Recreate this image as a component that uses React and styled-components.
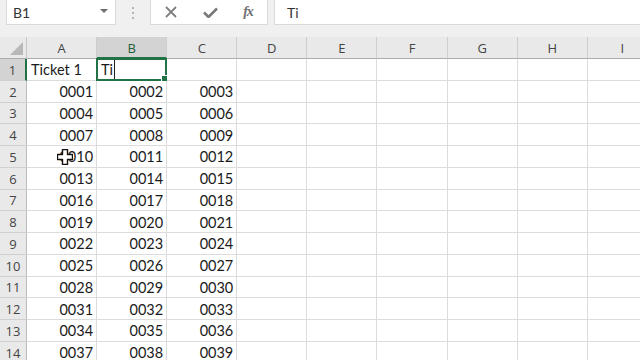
import { Fragment } from "react";
import styled, { createGlobalStyle } from "styled-components";

const GlobalStyle = createGlobalStyle`
  html, body {
    margin: 0;
    padding: 0;
    background: #ffffff;
    overflow: hidden;
  }
`;

// Page frame
const Sheet = styled.div`
  width: 640px;
  height: 360px;
  overflow: hidden;
  display: flex;
  flex-direction: column;
  background: #ffffff;
  font-family: Lato, "Liberation Sans", sans-serif;
`;

// Formula bar strip
const FormulaBar = styled.div`
  height: 37px;
  flex: 0 0 auto;
  display: flex;
  align-items: flex-start;
  padding-left: 6px;
  background: #f0f0f0;
  box-sizing: border-box;
`;

const NameBox = styled.div`
  width: 110px;
  height: 25px;
  box-sizing: border-box;
  background: #ffffff;
  border: 1px solid #d9d9d9;
  border-top: none;
  display: flex;
  align-items: center;
  justify-content: space-between;
  padding: 0 7px 0 6px;
  font-size: 14px;
  color: #333333;
`;

const DropArrow = styled.span`
  width: 0;
  height: 0;
  border-left: 4px solid transparent;
  border-right: 4px solid transparent;
  border-top: 4px solid #6d6d6d;
  margin-top: -2px;
`;

const Splitter = styled.div`
  width: 34px;
  height: 25px;
  display: flex;
  flex-direction: column;
  align-items: center;
  justify-content: center;
  gap: 3px;
`;

const Dot = styled.span`
  width: 2px;
  height: 2px;
  background: #b5b5b5;
`;

const ButtonGroup = styled.div`
  width: 118px;
  height: 25px;
  box-sizing: border-box;
  background: #ffffff;
  border: 1px solid #d9d9d9;
  border-top: none;
  display: grid;
  grid-template-columns: 40px 38px 38px;
  align-items: center;
`;

const BarButton = styled.div`
  display: flex;
  align-items: center;
  justify-content: center;
  height: 100%;
  color: #7d7d7d;
`;

const FxLabel = styled.span`
  font-family: "Liberation Serif", serif;
  font-style: italic;
  font-size: 14px;
  font-weight: bold;
  color: #6f6f6f;
  letter-spacing: -1px;
`;

const FormulaInput = styled.div`
  flex: 1;
  height: 25px;
  margin-left: 6px;
  box-sizing: border-box;
  background: #ffffff;
  border: 1px solid #d9d9d9;
  border-top: none;
  border-right: none;
  display: flex;
  align-items: center;
  padding-left: 12px;
  font-size: 14px;
  color: #333333;
`;

// Worksheet grid
const Grid = styled.div`
  display: grid;
  grid-template-columns: 27px repeat(9, 70.1px);
  grid-template-rows: 22px;
  grid-auto-rows: 21.75px;
`;

const Corner = styled.div`
  background: #e9e9e9;
  border-right: 1px solid #c6c6c6;
  border-bottom: 1px solid #ababab;
  box-sizing: border-box;
  position: relative;
`;

const CornerMark = styled.span`
  position: absolute;
  right: 3px;
  bottom: 3px;
  width: 13px;
  height: 13px;
  background: #b8b8b8;
  clip-path: polygon(100% 0, 100% 100%, 0 100%);
`;

const ColHeader = styled.div`
  box-sizing: border-box;
  background: ${(p) => (p.$selected ? "#d3d3d3" : "#e9e9e9")};
  border-right: 1px solid #cdcdcd;
  border-bottom: ${(p) => (p.$selected ? "2px solid #217346" : "1px solid #ababab")};
  display: flex;
  align-items: center;
  justify-content: center;
  font-family: "Open Sans", sans-serif;
  font-size: 13px;
  color: ${(p) => (p.$selected ? "#1f5e3a" : "#444444")};
  padding-top: ${(p) => (p.$selected ? "1px" : "0")};
`;

const RowHeader = styled.div`
  box-sizing: border-box;
  background: ${(p) => (p.$selected ? "#d3d3d3" : "#e9e9e9")};
  border-right: ${(p) => (p.$selected ? "2px solid #217346" : "1px solid #bdbdbd")};
  border-bottom: 1px solid #d0d0d0;
  display: flex;
  align-items: center;
  justify-content: center;
  font-family: "Open Sans", sans-serif;
  font-size: 13px;
  color: #444444;
  padding-top: 1px;
`;

const Cell = styled.div`
  box-sizing: border-box;
  position: relative;
  border-right: 1px solid #dcdcdc;
  border-bottom: 1px solid #dcdcdc;
  display: flex;
  align-items: center;
  justify-content: ${(p) => (p.$align === "right" ? "flex-end" : "flex-start")};
  padding: 1px 3px 0 4px;
  font-size: 14.5px;
  color: #1a1a1a;
  white-space: nowrap;
`;

const ActiveFrame = styled.span`
  position: absolute;
  left: -1px;
  top: -1px;
  right: -1px;
  bottom: -1px;
  border: 2px solid #217346;
  pointer-events: none;
`;

const FillHandle = styled.span`
  position: absolute;
  right: -3px;
  bottom: -3px;
  width: 5px;
  height: 5px;
  background: #217346;
  border: 1px solid #ffffff;
`;

const Caret = styled.span`
  display: inline-block;
  width: 1px;
  height: 20px;
  margin-left: 1px;
  background: #222222;
`;

const Pointer = styled.svg`
  position: absolute;
  left: 30px;
  top: 3px;
`;

const COLS = ["A", "B", "C", "D", "E", "F", "G", "H", "I"];
const ROWS = Array.from({ length: 14 }, (_, i) => i + 1);

const pad = (n) => String(n).padStart(4, "0");

const CrossCursor = () => (
  <Pointer width="16" height="16" viewBox="0 0 16 16">
    <path
      d="M5.5 0.5h5v5h5v5h-5v5h-5v-5h-5v-5h5z"
      fill="#ffffff"
      stroke="#111111"
      strokeWidth="1.4"
      strokeLinejoin="round"
    />
  </Pointer>
);

function cellContent(row, colIdx) {
  if (row === 1) {
    if (colIdx === 0) return { text: "Ticket 1", align: "left" };
    if (colIdx === 1) return { text: "Ti", align: "left", editing: true };
    return null;
  }
  if (colIdx < 3) {
    return { text: pad((row - 2) * 3 + colIdx + 1), align: "right" };
  }
  return null;
}

const App = () => {
  return (
    <>
      <GlobalStyle />
      <Sheet>
        <FormulaBar>
          <NameBox>
            B1
            <DropArrow />
          </NameBox>
          <Splitter>
            <Dot />
            <Dot />
            <Dot />
          </Splitter>
          <ButtonGroup>
            <BarButton>
              <svg width="12" height="12" viewBox="0 0 12 12">
                <path d="M1 1L11 11M11 1L1 11" stroke="#808080" strokeWidth="1.8" />
              </svg>
            </BarButton>
            <BarButton>
              <svg width="15" height="11" viewBox="0 0 15 11">
                <path d="M1 5.5L5.5 10L14 1.5" stroke="#7a7a7a" strokeWidth="2.6" fill="none" />
              </svg>
            </BarButton>
            <BarButton>
              <FxLabel>fx</FxLabel>
            </BarButton>
          </ButtonGroup>
          <FormulaInput>Ti</FormulaInput>
        </FormulaBar>

        <Grid>
          <Corner>
            <CornerMark />
          </Corner>
          {COLS.map((c) => (
            <ColHeader key={c} $selected={c === "B"}>
              {c}
            </ColHeader>
          ))}

          {ROWS.map((r) => (
            <Fragment key={r}>
              <RowHeader $selected={r === 1}>{r}</RowHeader>
              {COLS.map((c, ci) => {
                const content = cellContent(r, ci);
                return (
                  <Cell key={`${c}${r}`} $align={content ? content.align : "left"}>
                    {content && content.text}
                    {content && content.editing && <Caret />}
                    {content && content.editing && (
                      <ActiveFrame>
                        <FillHandle />
                      </ActiveFrame>
                    )}
                    {r === 5 && ci === 0 && <CrossCursor />}
                  </Cell>
                );
              })}
            </Fragment>
          ))}
        </Grid>
      </Sheet>
    </>
  );
};

export default App;
